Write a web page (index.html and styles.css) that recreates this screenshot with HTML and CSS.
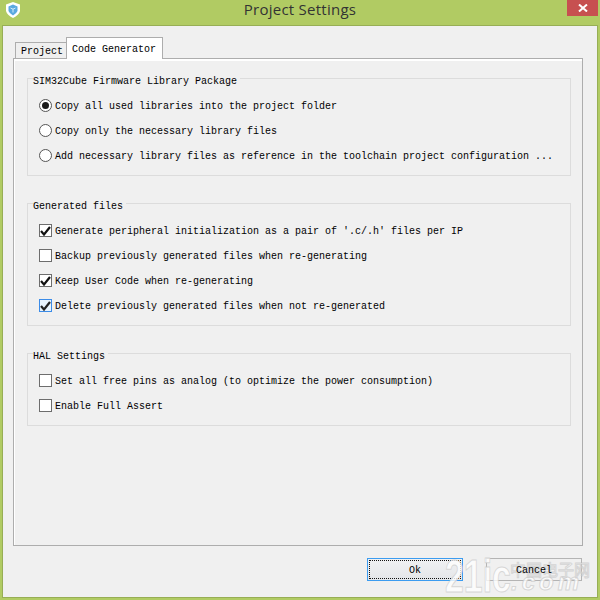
FILE: index.html
```html
<!DOCTYPE html>
<html lang="en">
  <head>
    <meta charset="UTF-8" />
    <title>Project Settings</title>
    <link rel="stylesheet" href="styles.css">
  </head>

  <body>
    <div class="window">
      <div class="titlebar">
        <svg class="app-icon" width="14" height="16" viewBox="0 0 14 16">
          <path d="M7 0 L14 2.5 V9 Q13 13 7 16 Q1 13 0 9 V2.5 Z" fill="#fff" />
          <path d="M7 2.5 L11.5 4.5 V9 Q10.5 11.5 7 13.5 Q3.5 11.5 2.5 9 V4.5 Z" fill="#5aa9e0" />
          <path d="M4.5 6 L7 7.2 L9.5 6 M7 7.2 V10.5" fill="none" stroke="#d5ecfa" stroke-width="1" />
        </svg>
        <span class="title">Project Settings</span>
        <div class="close">
          <svg width="10" height="8" viewBox="0 0 10 8">
            <path d="M1 0.5 L9 7.5 M9 0.5 L1 7.5" stroke="#fff" stroke-width="2" />
          </svg>
        </div>
      </div>

      <div class="client">
        <div class="tabs">
          <div class="tab">Project</div>
          <div class="tab active">Code Generator</div>
        </div>

        <div class="pane">
          <div class="group group-firmware">
            <div class="legend">SIM32Cube Firmware Library Package</div>
            <div class="row"><span class="radio checked"></span><span class="label">Copy all used libraries into the project folder</span></div>
            <div class="row"><span class="radio"></span><span class="label">Copy only the necessary library files</span></div>
            <div class="row"><span class="radio"></span><span class="label">Add necessary library files as reference in the toolchain project configuration ...</span></div>
          </div>

          <div class="group group-files">
            <div class="legend">Generated files</div>
            <div class="row">
              <span class="check"><svg width="11" height="10" viewBox="0 0 11 10"><path d="M1 5 L4 8.5 L10 1" fill="none" stroke="#111" stroke-width="2.2" /></svg></span>
              <span class="label">Generate peripheral initialization as a pair of '.c/.h' files per IP</span>
            </div>
            <div class="row"><span class="check"></span><span class="label">Backup previously generated files when re-generating</span></div>
            <div class="row">
              <span class="check"><svg width="11" height="10" viewBox="0 0 11 10"><path d="M1 5 L4 8.5 L10 1" fill="none" stroke="#111" stroke-width="2.2" /></svg></span>
              <span class="label">Keep User Code when re-generating</span>
            </div>
            <div class="row">
              <span class="check hover"><svg width="11" height="10" viewBox="0 0 11 10"><path d="M1 5 L4 8.5 L10 1" fill="none" stroke="#222" stroke-width="2.2" /></svg></span>
              <span class="label">Delete previously generated files when not re-generated</span>
            </div>
          </div>

          <div class="group group-hal">
            <div class="legend">HAL Settings</div>
            <div class="row"><span class="check"></span><span class="label">Set all free pins as analog (to optimize the power consumption)</span></div>
            <div class="row"><span class="check"></span><span class="label">Enable Full Assert</span></div>
          </div>
        </div>

        <div class="buttons">
          <button class="btn default"><span class="focus">Ok</span></button>
          <button class="btn"><span class="btn-text">Cancel</span></button>
        </div>
      </div>

      <div class="wm wm-num">21ic</div>
      <div class="wm wm-com">.com</div>
      <div class="wm wm-cn">中国电子网</div>
    </div>
  </body>
</html>
```

FILE: styles.css
```css
* {
  box-sizing: border-box;
}

html,
body {
  margin: 0;
  padding: 0;
  width: 600px;
  height: 600px;
  overflow: hidden;
}

body {
  font-family: "Liberation Mono", monospace;
  font-size: 10px;
  color: #000;
}

.window {
  position: relative;
  width: 600px;
  height: 600px;
  display: flex;
  flex-direction: column;
  background-color: #b1cb63;
}

/* Title bar */
.titlebar {
  position: relative;
  height: 25px;
  flex: none;
  display: flex;
  align-items: flex-start;
  justify-content: center;
}

.app-icon {
  position: absolute;
  left: 6px;
  top: 2px;
}

.title {
  font-family: "Open Sans", sans-serif;
  font-size: 15px;
  line-height: 19px;
  color: #333;
  letter-spacing: 0.25px;
}

.close {
  position: absolute;
  right: 2px;
  top: 0;
  width: 31px;
  height: 16px;
  background-color: #c75050;
  display: flex;
  align-items: center;
  justify-content: center;
}

/* Dialog body */
.client {
  flex: 1;
  margin: 0 2px 2px 2px;
  padding: 12px 10px 0 10px;
  background-color: #f0f0f0;
  border: 1px solid #97ae55;
  display: flex;
  flex-direction: column;
}

.tabs {
  display: flex;
  align-items: flex-end;
  height: 21px;
  padding-left: 2px;
  position: relative;
  z-index: 1;
  margin-bottom: -1px;
}

.tab {
  height: 17px;
  padding: 0 5px;
  width: 51px;
  line-height: 17px;
  background-color: #efefef;
  border: 1px solid #adadad;
  border-right: none;
}

.tab.active {
  width: 97px;
  height: 22px;
  line-height: 23px;
  background-color: #fff;
  border: 1px solid #adadad;
  border-bottom: none;
}

.pane {
  height: 488px;
  width: 570px;
  background-color: #f0f0f0;
  border: 1px solid #adadad;
  box-shadow: inset 1px 1px 0 #fff, inset 0 2px 0 #fff;
  padding: 19px 11px 0 13px;
}

.group {
  position: relative;
  margin: 0 0 27px 0;
  padding: 14px 0 0 11px;
  border: 1px solid #dcdcdc;
}

/* the caption sits over the group's top border */
.legend {
  position: absolute;
  left: 5px;
  top: -3px;
  padding-right: 3px;
  line-height: 12px;
  background-color: #f0f0f0;
}

.group-firmware {
  height: 98px;
}

.group-files {
  height: 123px;
}

.group-hal {
  height: 73px;
}

.row {
  height: 25px;
  display: flex;
  align-items: center;
  gap: 3px;
  white-space: nowrap;
}

.label {
  padding-top: 1px;
}

.radio {
  width: 13px;
  height: 13px;
  flex: none;
  border: 1px solid #555;
  border-radius: 50%;
  background-color: #fff;
  display: flex;
  align-items: center;
  justify-content: center;
}

.radio.checked::after {
  content: "";
  width: 7px;
  height: 7px;
  border-radius: 50%;
  background-color: #1a1a1a;
}

.check {
  width: 13px;
  height: 13px;
  flex: none;
  border: 1px solid #6d6d6d;
  background-color: #fff;
  display: flex;
  align-items: center;
  justify-content: center;
}

.check.hover {
  border-color: #3c8ce8;
  background-color: #e8f3fd;
}

/* Buttons */
.buttons {
  display: flex;
  justify-content: flex-end;
  gap: 23px;
  padding-top: 12px;
  padding-right: 1px;
  width: 570px;
}

.btn {
  width: 96px;
  height: 23px;
  padding: 3px 1px 1px;
  font-family: "Liberation Mono", monospace;
  font-size: 10px;
  color: #000;
  border: 1px solid #b4b4b4;
  background-color: #f0f0f0;
}

.btn.default {
  padding: 1px;
  border-color: #3c9cf0;
  background: linear-gradient(#f0f1f3, #e4e6e9);
}

.focus {
  display: block;
  height: 100%;
  line-height: 19px;
  border: 1px dotted #111;
}

/* stays readable on top of the watermark */
.btn-text {
  position: relative;
  z-index: 2;
}

/* 21ic watermark over the bottom right corner */
.wm {
  position: absolute;
  font-family: "Liberation Sans", sans-serif;
  font-weight: bold;
  color: rgba(255, 255, 255, 0.8);
  -webkit-text-stroke: 1px rgba(200, 200, 200, 0.7);
  white-space: nowrap;
  pointer-events: none;
}

.wm-num {
  left: 445px;
  top: 548px;
  font-size: 47px;
  transform: scaleX(0.72);
  transform-origin: left top;
}

.wm-com {
  left: 511px;
  top: 568px;
  font-size: 24px;
  font-style: italic;
  letter-spacing: 4px;
}

.wm-cn {
  left: 510px;
  top: 558px;
  font-family: "Noto Sans CJK SC", sans-serif;
  font-weight: normal;
  font-size: 16px;
  line-height: 22px;
  color: rgba(255, 255, 255, 0.8);
  -webkit-text-stroke: 1px rgba(190, 190, 190, 0.6);
}
```
